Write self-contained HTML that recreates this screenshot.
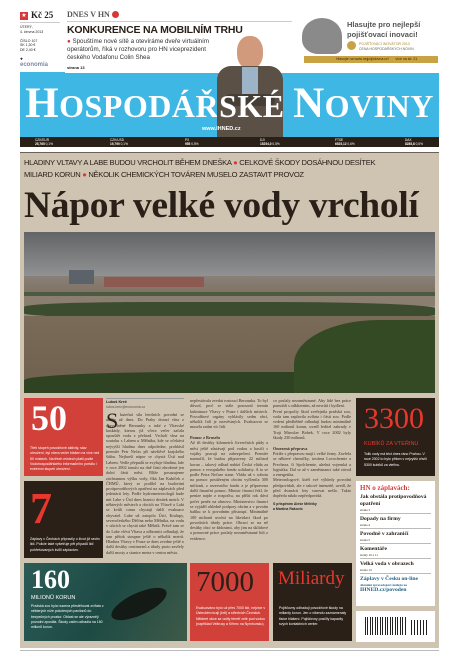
<!DOCTYPE html>
<html><head><meta charset="utf-8"><style>
*{margin:0;padding:0;box-sizing:border-box}
body{width:459px;height:660px;background:#fff;position:relative;overflow:hidden;font-family:"Liberation Sans",sans-serif;color:#222}
.a{position:absolute}
.serif{font-family:"Liberation Serif",serif}
.col{position:absolute;font-family:"Liberation Serif",serif;font-size:4.2px;line-height:5.3px;color:#3a3028;text-align:justify;overflow:hidden}
.box{position:absolute;color:#fff}
.it{font-size:5.6px;line-height:7px;font-weight:bold;color:#2a2018;margin-top:2px}
.st{font-size:3.2px;line-height:4px;font-weight:normal;border-bottom:1px solid #bbb;padding-bottom:1px}
</style></head><body>
<div class="a" style="left:20px;top:12px;width:8px;height:8px;background:#d8373a;color:#fff;font-size:6px;text-align:center;line-height:8px">★</div>
<div class="a serif" style="left:31px;top:10px;font-size:9px;font-weight:bold">Kč 25</div>
<div class="a" style="left:20px;top:22px;width:40px;border-top:1px solid #ccc"></div>
<div class="a" style="left:20px;top:25px;font-size:3.5px;line-height:4.5px">ÚTERÝ,<br>4. června 2013<br><br>ČÍSLO 107<br>SK 1,30 €<br>DE 2,40 €<br><br>✚</div>
<div class="a" style="left:20px;top:62px;font-size:6px;color:#7a8aa5;font-weight:bold">economia</div>
<div class="a" style="left:20px;top:72px;width:45px;border-top:1px solid #3fb7e5"></div>
<div class="a serif" style="left:67px;top:10px;font-size:8px;font-weight:bold;color:#555">DNES V HN <span style="display:inline-block;width:7px;height:7px;border-radius:50%;background:#d8373a;vertical-align:-1px"></span></div>
<div class="a" style="left:67px;top:21px;width:225px;border-top:1px solid #ccc"></div>
<div class="a" style="left:67px;top:24px;font-size:10.5px;font-weight:900;color:#2a2018;letter-spacing:-0.2px">KONKURENCE NA MOBILNÍM TRHU</div>
<div class="a" style="left:67px;top:38px;width:160px;font-size:6.2px;line-height:8.2px;color:#333"><span style="color:#d8373a">●</span> Spouštíme nové sítě a otevíráme dveře virtuálním operátorům, říká v rozhovoru pro HN viceprezident českého Vodafonu Colin Shea</div>
<div class="a" style="left:67px;top:65px;font-size:4px;font-weight:bold">strana 13</div>
<div class="a" style="left:302px;top:18px;width:40px;height:36px;border-radius:50% 50% 20% 40%;background:#8a8a8a"></div>
<div class="a" style="left:347px;top:20px;font-size:7.5px;font-weight:bold;color:#555;line-height:9.5px">Hlasujte pro nejlepší<br>pojišťovací inovaci!</div>
<div class="a" style="left:347px;top:41px;width:9px;height:9px;border-radius:50%;background:#c9a343"></div>
<div class="a" style="left:359px;top:42px;font-size:3.5px;line-height:4.5px;color:#a8862a">POJIŠŤOVACÍ INOVÁTOR 2013<br><span style="color:#666">CENA HOSPODÁŘSKÝCH NOVIN</span></div>
<div class="a" style="left:304px;top:56px;width:134px;height:7px;background:#c9a343;font-size:3.5px;line-height:7px;color:#3a2a00;padding-left:32px">Hlasujte na www.nejpojistovna.cz! &nbsp; &nbsp; &nbsp; více na str. 21</div>
<div class="a" style="left:20px;top:73px;width:419px;height:64px;background:#3fb7e5"></div>
<div class="a serif" style="left:20px;top:84px;width:419px;text-align:center;color:#fff;font-size:32px;line-height:40px;font-weight:bold;white-space:nowrap;letter-spacing:0.5px"><span style="font-size:43px">H</span>OSPODÁŘ<span style="color:transparent">SKÉ</span> <span style="font-size:43px">N</span>OVINY</div>
<div class="a" style="left:215px;top:36px;width:68px;height:111px">
  <div class="a" style="left:22px;top:0;width:26px;height:33px;border-radius:45%;background:#d19a7c"></div>
  <div class="a" style="left:2px;top:30px;width:66px;height:81px;border-radius:14px 14px 0 0;background:#5a5046"></div>
  <div class="a" style="left:27px;top:31px;width:16px;height:30px;background:#9db4c8"></div>
  <div class="a" style="left:10px;top:58px;width:50px;height:12px;background:#463e36;border-radius:5px"></div>
</div>
<div class="a serif" style="left:20px;top:84px;width:419px;text-align:center;color:#fff;font-size:32px;line-height:40px;font-weight:bold;white-space:nowrap;letter-spacing:0.5px"><span style="color:transparent"><span style="font-size:43px">H</span>OSPODÁŘ</span>SKÉ <span style="color:transparent"><span style="font-size:43px">N</span>OVINY</span></div>
<div class="a" style="left:202px;top:126px;font-size:5.5px;color:#fff;font-weight:bold">www.IHNED.cz</div>
<div class="a" style="left:20px;top:137px;width:419px;height:10px;background:#2a2018;color:#fff;font-size:3.2px;line-height:4.2px">
 <div class="a" style="left:15px;top:1px">CZK/EUR<br><b>25,765</b> 0,1%</div>
 <div class="a" style="left:90px;top:1px">CZK/USD<br><b>19,790</b> 0,1%</div>
 <div class="a" style="left:165px;top:1px">PX<br><b>955</b> 0,5%</div>
 <div class="a" style="left:240px;top:1px">DJI<br><b>15254,0</b> 0,5%</div>
 <div class="a" style="left:315px;top:1px">FTSE<br><b>6525,12</b> 0,6%</div>
 <div class="a" style="left:385px;top:1px">DAX<br><b>8285,8</b> 0,5%</div>
</div>
<div class="a" style="left:20px;top:152px;width:419px;height:496px;background:#cfc3b2;border-top:1px solid #6a6056"></div>
<div class="a" style="left:24px;top:157px;width:415px;font-size:7.6px;line-height:12px;color:#2a2018;letter-spacing:-0.3px;white-space:nowrap">HLADINY VLTAVY A LABE BUDOU VRCHOLIT BĚHEM DNEŠKA <span style="color:#d8373a">●</span> CELKOVÉ ŠKODY DOSÁHNOU DESÍTEK<br>MILIARD KORUN <span style="color:#d8373a">●</span> NĚKOLIK CHEMICKÝCH TOVÁREN MUSELO ZASTAVIT PROVOZ</div>
<div class="a serif" style="left:24px;top:186px;font-size:37.5px;line-height:40px;font-weight:bold;color:#2a2018;letter-spacing:-0.3px;white-space:nowrap">Nápor velké vody vrcholí</div>
<div class="a" style="left:24px;top:232px;width:411px;height:161px;overflow:hidden;background:linear-gradient(#626466 0%,#8c8e90 25%,#a4a5a5 40%,#8e8a84 46%)">
 <div class="a" style="left:0;top:44px;width:411px;height:20px;background:linear-gradient(#8a8078,#7e7060)"></div>
 <div class="a" style="left:45px;top:38px;width:25px;height:14px;background:#5c626a"></div>
 <div class="a" style="left:80px;top:45px;width:100px;height:10px;background:#8c5a50"></div>
 <div class="a" style="left:0;top:60px;width:411px;height:6px;background:#4c5a40"></div>
 <div class="a" style="left:0;top:64px;width:411px;height:10px;background:#8a7e70"></div>
 <div class="a" style="left:0;top:70px;width:411px;height:16px;background:#3c4c2e;border-radius:30% 40% 20% 30%"></div>
 <div class="a" style="left:0;top:84px;width:411px;height:77px;background:linear-gradient(#7a6a58,#6f604e)"></div>
 <div class="a" style="left:0;top:140px;width:411px;height:21px;background:#2f4222;border-radius:40% 30% 0 0"></div>
 <div class="a" style="left:270px;top:88px;width:141px;height:73px;background:#344a24;border-radius:60% 0 0 0"></div>
</div>
<div class="box" style="left:24px;top:398px;width:79px;height:78px;background:#d2403a">
 <div class="serif" style="position:absolute;left:7px;top:0px;font-size:36px;font-weight:bold;line-height:40px">50</div>
 <div style="position:absolute;left:6px;top:48px;width:70px;font-size:3.5px;line-height:5.3px">Třetí stupeň povodňové aktivity, stav ohrožení, byl včera večer hlášen na více než 50 místech. Na třech místech platil podle Vodohospodářského informačního portálu i extrémní stupeň ohrožení.</div>
</div>
<div class="box" style="left:24px;top:481px;width:79px;height:77px;background:#2a2018">
 <div class="serif" style="position:absolute;left:6px;top:4px;font-size:44px;font-weight:bold;color:#e8382e;line-height:48px">7</div>
 <div style="position:absolute;left:6px;top:56px;width:70px;font-size:3.5px;line-height:5.3px">Záplavy v Čechách připravily o život již sedm lidí. Policie také vyšetřuje pět případů lidí pohřešovaných kvůli záplavám.</div>
</div>
<div class="a" style="left:106px;top:398px;width:78px;border-top:1px solid #999"></div>
<div class="a" style="left:106px;top:400px;font-size:3.8px;font-weight:bold">Luboš Kreč</div>
<div class="a" style="left:106px;top:405px;font-size:3.5px;color:#555">lubos.krec@economia.cz</div>
<div class="a serif" style="left:106px;top:410px;font-size:22px;line-height:22px;color:#2a2018">S</div>
<div class="col" style="left:106px;top:412px;width:78px;height:148px;text-indent:14px">kutečná síla letošních povodní se ukáže už dnes. Do Prahy dorazí vlna z rozvodněné Berounky a také z Vltavské kaskády, kterou již včera večer začala opouštět voda z přehrad. Vrcholí vlna na soutoku s Labem u Mělníka, kde se očekává nejvyšší hladina dnes odpoledne, prohlásil premiér Petr Nečas při návštěvě krajského štábu. Nejhorší nápor se chystá Ústí nad Labem. Vedle přepadů se zvyšuje hladina, kde v roce 2002 tonulo na dně části ohrožené jen dolní části měst. Blíže posuzujeme záchrannou výšku vody, říká Jan Kubíček z ČHMÚ, který se podílel na budování protipovodňových opatření na záplavách před jedenácti lety. Podle hydrometeorologů bude mít Labe v Ústí dnes hranici desítek metrů. V některých městech a obcích na Vltavě a Labi se kvůli tomu chystají další evakuace obyvatel. Labe už zatopilo Ústí, Kralupy, severočeského Děčína nebo Mělníka, na vodu v ulicích se chystá také Mělník. Právě tam se do Labe vlévá Vltava a odborníci odhadují, že tam přítok stoupne ještě o několik metrů. Hladina Vltavy v Praze se dnes zvedne ještě o další desítky centimetrů a úřady proto zavřely další mosty a stanice metra v centru města.</div>
<div class="col" style="left:190px;top:398px;width:78px;height:162px">nepřestávala zvedat rostoucí Berounka. To byl důvod, proč se stále posouval termín kulminace Vltavy v Praze i dalších místech. Povodňové orgány vyhlásily sedm obcí, několik lidí je nezvěstných. Evakuovat se musela zatím víc lidí.<br><br><b>Pomoc z Bruselu</b><br>Až tři desítky kilometrů čtverečních půdy a měst ještě zůstávají pod vodou a hasiči s vojáky pracují na zabezpečení. Premiér naznačil, že budou připraveny 22 miliard korun – takový odhad nabízí Česká vláda za pomoc z evropského fondu solidarity. A to se podle Petra Nečase stane. Vláda už v sobotu na pomoc postiženým obcím vyčlenila 300 milionů, z rezervního fondu a je připravena další finanční pomoc. Ministr financí řekl, že peníze najde z rozpočtu, na příští rok dává počet peněz na obnovu. Ministerstvo financí se vyjádří ohledně podpory obcím a v prvním balíku se k povodním přistoupí. Minimálně 100 milionů uvolní na likvidaci škod po povodních úřady práce. Obrací se na ně desítky obcí se žádostmi, aby jim na úklidové a pomocné práce poslaly nezaměstnané lidi z evidence.</div>
<div class="col" style="left:273px;top:398px;width:78px;height:100px">co poslaly nezaměstnané. Aby lidé bez práce pomohli s odklizením, až nevrátí i bydlení.<br>První propočty škod zveřejnila pražská zoo, voda tam zaplavila zvířata i části zoo. Podle vedení předběžně odhadují budou minimálně 160 milionů korun, uvedl ředitel zahrady v Troji Miroslav Bobek. V roce 2002 byly škody 230 milionů.<br><br><b>Omezená přeprava</b><br>Potíže s přepravou mají i velké firmy. Zavřela se některé chemičky, továrna Lovochemie a Precheza, či Spolchemie, uhelná vojenská a logistika. Dal se až v zaměstnanci také závod a energetika.<br>Meteorologové, kteří své výhledy povodní předpovídali, ale v takové intenzitě, uvedl, že před dvanácti lety varovat nešlo. Takto dopředu nikdo nepředpovídá.</div>
<div class="a" style="left:273px;top:502px;font-size:3.5px;line-height:5px;font-weight:bold">S přispěním Aleše Mělčíky<br>a Martina Rakovic</div>
<div class="box" style="left:356px;top:398px;width:79px;height:78px;background:#2a2018">
 <div class="serif" style="position:absolute;left:8px;top:4px;font-size:30px;color:#e8382e;line-height:34px">3300</div>
 <div style="position:absolute;left:8px;top:43px;font-size:5.5px;color:#e8382e">KUBÍKŮ ZA VTEŘINU</div>
 <div style="position:absolute;left:8px;top:54px;width:68px;font-size:3.5px;line-height:5.3px">Tolik vody má téct dnes ráno Prahou. V roce 2002 to bylo přitom v nejvyšší chvíli 5300 kubíků za vteřinu.</div>
</div>
<div class="a serif" style="left:356px;top:481px;width:79px;height:125px;background:#fff;padding:3px 4px">
 <div style="font-size:7px;color:#d2403a;font-weight:bold">HN o záplavách:</div>
 <div class="it">Jak obstála protipovodňová opatření<div class="st">strana 3</div></div>
 <div class="it">Dopady na firmy<div class="st">strana 4</div></div>
 <div class="it">Povodně v zahraničí<div class="st">strana 5</div></div>
 <div class="it">Komentáře<div class="st">strany 10 a 11</div></div>
 <div class="it">Velká voda v obrazech<div class="st">strana 14</div></div>
 <div class="it" style="color:#1f5f80">Záplavy v Česku on-line<div style="font-size:3.2px;line-height:4px">Aktuální zpravodajství sledujte na</div>IHNED.cz/povoden</div>
</div>
<div class="a" style="left:356px;top:611px;width:79px;height:31px;background:#fff">
 <div class="a" style="left:9px;top:6px;width:42px;height:18px;background:repeating-linear-gradient(90deg,#222 0 1px,#fff 1px 2px,#222 2px 3px,#fff 3px 5px)"></div>
 <div class="a" style="left:55px;top:9px;width:17px;height:15px;background:repeating-linear-gradient(90deg,#222 0 1px,#fff 1px 3px)"></div>
</div>
<div class="box" style="left:24px;top:563px;width:163px;height:78px;background:linear-gradient(120deg,#2c5b55,#1d4a44 50%,#3f5a48)">
 <div class="a" style="left:85px;top:30px;width:60px;height:22px;border-radius:50%;background:#141a16;transform:rotate(-25deg)"></div>
 <div class="serif" style="position:absolute;left:7px;top:2px;font-size:26px;font-weight:bold;line-height:30px">160</div>
 <div style="position:absolute;left:7px;top:32px;font-size:5.5px">MILIONŮ KORUN</div>
 <div style="position:absolute;left:7px;top:41px;width:78px;font-size:3.5px;line-height:5.3px">Pražská zoo byla nucena přestěhovat zvířata z některých níže položených pavilonů do bezpečných prostor. Oblast se ale výrazněji povodní zpustila. Škody zatím odhadla na 160 milionů korun.</div>
</div>
<div class="box" style="left:190px;top:563px;width:79px;height:78px;background:#d2403a">
 <div class="serif" style="position:absolute;left:6px;top:2px;font-size:29px;color:#2a2018;line-height:34px">7000</div>
 <div style="position:absolute;left:6px;top:43px;width:70px;font-size:3.5px;line-height:5.3px">Evakuováno bylo už přes 7000 lidí, nejvíce v Ústeckém kraji (krtI) a středních Čechách. Některé obce se ocitly téměř celé pod vodou (například Veltrusy a Křinec na Nymbursku).</div>
</div>
<div class="box" style="left:273px;top:563px;width:79px;height:78px;background:#2a2018">
 <div class="serif" style="position:absolute;left:5px;top:4px;font-size:19px;color:#e8382e;line-height:24px">Miliardy</div>
 <div style="position:absolute;left:6px;top:43px;width:70px;font-size:3.5px;line-height:5.3px">Pojišťovny odhadují povodňové škody na miliardy korun. Jen o víkendu zaznamenaly tisíce hlášení. Pojišťovny posílily kapacity svých kontaktních center.</div>
</div>
<div class="a" style="left:20px;top:650px;width:419px;border-top:1px solid #bbb"></div>
</body></html>
